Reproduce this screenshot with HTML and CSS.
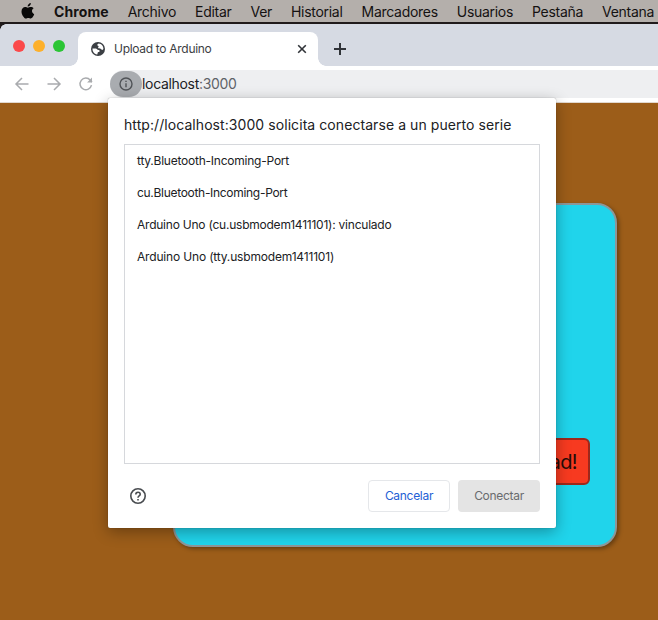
FILE: index.html
```html
<!DOCTYPE html>
<html lang="es">
<head>
<meta charset="utf-8">
<title>Upload to Arduino</title>
<link rel="stylesheet" href="styles.css">
</head>
<body>
<nav class="menubar">
  <svg class="apple" viewBox="0 0 14 16"><path d="M9.8 0c.1 1-.3 1.900-.9 2.600-.6.700-1.400 1.100-2.200 1C6.600 2.700 7 1.800 7.600 1.200 8.200.5 9.100.1 9.800 0zM12.700 5.300c-1.200.8-1.700 1.700-1.700 2.800 0 1.400.8 2.500 2.200 3.100-.3 1-.9 2-1.500 2.900-.7 1-1.300 1.400-2 1.400-.9 0-1.300-.5-2.400-.5s-1.500.5-2.400.5c-.8 0-1.500-.6-2.200-1.600C1.200 12.300.5 10.400.5 8.500c0-2.900 1.800-4.500 3.700-4.500 1 0 1.900.7 2.700.7.700 0 1.700-.7 2.900-.7 1.100 0 2.200.4 2.900 1.300z"/></svg>
  <span class="app">Chrome</span><span>Archivo</span><span>Editar</span><span>Ver</span><span>Historial</span><span>Marcadores</span><span>Usuarios</span><span>Pestaña</span><span>Ventana</span>
</nav>
<header class="tabs">
  <div class="lights"><i class="red"></i><i class="yellow"></i><i class="green"></i></div>
  <div class="tab">
    <svg class="globe" viewBox="0 0 14 14"><circle cx="7" cy="7" r="7" fill="#3b3f44"/><path d="M1.500 6.500h3.200c1.400 0 1.400 1.600 2.700 1.600 1 0 1.500.7 1.100 1.500-.4.700-1.600.5-1.900 1.300-.2.600.1 1.300-.5 1.500C3.300 12 1.300 9.500 1.500 6.500zM7.600 1.500c-.8.500-1.500 1-1.300 1.700.2.600 1.300.4 1.300 1.200 0 .7-.8.900-.5 1.500.4.700 1.700.3 2.500.8.700.4 1 1.200 1.700 1.200.6 0 .8-.4 1.100-.8C12.500 4 10.500 1.700 7.600 1.500z" fill="#fff"/></svg>
    <span class="tab-title">Upload to Arduino</span>
    <svg class="close" viewBox="0 0 10 10"><path d="M1.200 1.200l7.600 7.600M8.800 1.200L1.200 8.800"/></svg>
  </div>
  <svg class="plus" viewBox="0 0 12 12"><path d="M6 0v12M0 6h12"/></svg>
</header>
<div class="toolbar">
  <svg class="nav" viewBox="0 0 16 16"><path d="M14.500 8H2M8 2L2 8l6 6"/></svg>
  <svg class="nav" viewBox="0 0 16 16"><path d="M1.500 8H14M8 2l6 6-6 6"/></svg>
  <svg class="nav" viewBox="0 0 16 16"><path d="M13.500 9.200A5.800 5.800 0 1 1 12.300 4.200L14 6"/><path d="M14 1.600V6.500H9.100z" class="solid"/></svg>
  <div class="omnibox">
    <span class="info"><svg viewBox="0 0 14 14"><circle cx="7" cy="7" r="6"/><path d="M7 6.200v4M7 3.700v1.400"/></svg></span>
    <span class="url"><b>localhost</b>:3000</span>
  </div>
</div>
<main class="page">
  <section class="panel"><button class="action">ad!</button></section>
</main>
<div class="dialog" role="dialog">
  <h1>http://localhost:3000 solicita conectarse a un puerto serie</h1>
  <ul class="ports">
    <li>tty.Bluetooth-Incoming-Port</li>
    <li>cu.Bluetooth-Incoming-Port</li>
    <li>Arduino Uno (cu.usbmodem1411101): vinculado</li>
    <li>Arduino Uno (tty.usbmodem1411101)</li>
  </ul>
  <footer>
    <svg class="help" viewBox="0 0 16 16"><circle cx="8" cy="8" r="7.200"/><path d="M5.800 6.500C5.800 3.500 10.200 3.500 10.200 6.300 10.200 7.900 8 7.900 8 9.700M8 11v1.400"/></svg>
    <button class="cancel">Cancelar</button>
    <button class="connect">Conectar</button>
  </footer>
</div>
</body>
</html>
```

FILE: styles.css
```css
* { box-sizing: border-box; }
body {
  margin: 0;
  width: 658px;
  height: 620px;
  overflow: hidden;
  display: flex;
  flex-direction: column;
  background: #9c5d19;
  font-family: Inter, "Liberation Sans", sans-serif;
  color: #202124;
}
svg { display: block; flex: none; }
button { font: inherit; letter-spacing: inherit; padding: 0; }
.menubar {
  height: 24px;
  flex: none;
  display: flex;
  gap: 19px;
  padding-left: 21px;
  background: #b4afab;
  border-bottom: 2px solid #201a1b;
  font-size: 14px;
  line-height: 23px;
  letter-spacing: -0.29px;
  color: #141212;
  white-space: nowrap;
}
.apple { width: 14px; height: 16px; margin-top: 3px; fill: #080808; }
.app { font-weight: 700; letter-spacing: 0.1px; }
.tabs {
  height: 42px;
  flex: none;
  display: flex;
  align-items: flex-end;
  background: radial-gradient(circle at 6px 6px, #d6dae3 5.5px, #201a1b 6px) 0 0 / 6px 6px no-repeat, #d6dae3;
}
.lights { width: 78px; height: 42px; padding: 16px 0 0 13px; display: flex; gap: 8px; }
.lights i { width: 12px; height: 12px; border-radius: 50%; }
.red { background: #fb494a; }
.yellow { background: #fdb02b; }
.green { background: #2bc535; }
.tab {
  width: 240px;
  height: 34px;
  display: flex;
  align-items: center;
  padding: 0 11px 0 13px;
  background: #fff;
  border-radius: 8px 8px 0 0;
  position: relative;
}
.tab::before, .tab::after { content: ""; position: absolute; bottom: 0; width: 8px; height: 8px; }
.tab::before { left: -8px; background: radial-gradient(circle at 0 0, #d6dae3 7.5px, #fff 8px); }
.tab::after { right: -8px; background: radial-gradient(circle at 100% 0, #d6dae3 7.5px, #fff 8px); }
.globe { width: 14px; height: 14px; }
.tab-title { margin-left: 9px; padding-bottom: 1px; font-size: 12px; letter-spacing: -0.3px; flex: 1; color: #3c4043; }
.close { width: 10px; height: 10px; stroke: #303338; stroke-width: 1.6; }
.plus { width: 12px; height: 12px; margin: 0 0 11px 16px; stroke: #303338; stroke-width: 2; }
.toolbar {
  height: 37px;
  flex: none;
  display: flex;
  padding: 4px 0 0 14px;
  gap: 16px;
  background: #fff;
  border-bottom: 1px solid #e1d8cf;
}
.nav { width: 16px; height: 16px; margin-top: 6px; fill: none; stroke: #a9abae; stroke-width: 1.5; }
.nav .solid { fill: #a9abae; stroke: none; }
.omnibox { flex: 1; height: 28px; display: flex; background: #eeeff1; border-radius: 14px 0 0 14px; }
.info { width: 32px; height: 26px; margin-top: 1px; border-radius: 13px; background: #a9acb0; display: grid; place-items: center; }
.info svg { width: 14px; height: 14px; fill: none; stroke: #505357; stroke-width: 1.4; }
.url { font-size: 14px; line-height: 28px; letter-spacing: -0.32px; color: #5f6368; }
.url b { font-weight: 400; color: #202124; }
.page { flex: 1; display: flex; padding: 100px 0 0 173px; background: #9c5d19; }
.panel {
  width: 444px;
  height: 344px;
  display: flex;
  justify-content: flex-end;
  align-items: flex-end;
  padding: 0 25px 60px 0;
  background: #20d4eb;
  border: 2px solid #8d9697;
  border-radius: 20px;
  box-shadow: 2px 2px 4px rgba(0,0,0,.35);
}
.action {
  width: 120px;
  height: 47px;
  padding-right: 11px;
  text-align: right;
  font-size: 20px;
  letter-spacing: -0.6px;
  color: #260c08;
  background: #f73a20;
  border: 2px solid #9e281b;
  border-radius: 6px;
}
.dialog {
  position: absolute;
  left: 108px;
  top: 98px;
  width: 448px;
  height: 430px;
  padding: 16px;
  background: #fff;
  border-radius: 2px;
  box-shadow: 0 0 1px rgba(0,0,0,.45), 0 4px 15px rgba(0,0,0,.32);
}
h1 { margin: 0; height: 30px; font-size: 14px; font-weight: 400; line-height: 22px; letter-spacing: 0.07px; white-space: nowrap; }
.ports { margin: 0; padding: 0 12px; height: 320px; border: 1px solid #d6d8dc; list-style: none; font-size: 12px; line-height: 32px; letter-spacing: -0.23px; }
.ports li { height: 32px; white-space: nowrap; }
.ports li:nth-child(2) { letter-spacing: -0.3px; }
.ports li:nth-child(4) { letter-spacing: -0.17px; }
footer { display: flex; align-items: center; height: 32px; margin-top: 16px; gap: 8px; font-size: 12px; letter-spacing: -0.3px; }
.help { width: 16px; height: 16px; margin: 0 auto 0 6px; fill: none; stroke: #494c50; stroke-width: 1.6; }
.cancel, .connect { width: 82px; height: 32px; padding-bottom: 2px; border-radius: 4px; }
.cancel { background: #fff; border: 1px solid #e5e7ea; color: #2460d5; }
.connect { background: #e4e4e4; border: 0; color: #696b6e; }
```
